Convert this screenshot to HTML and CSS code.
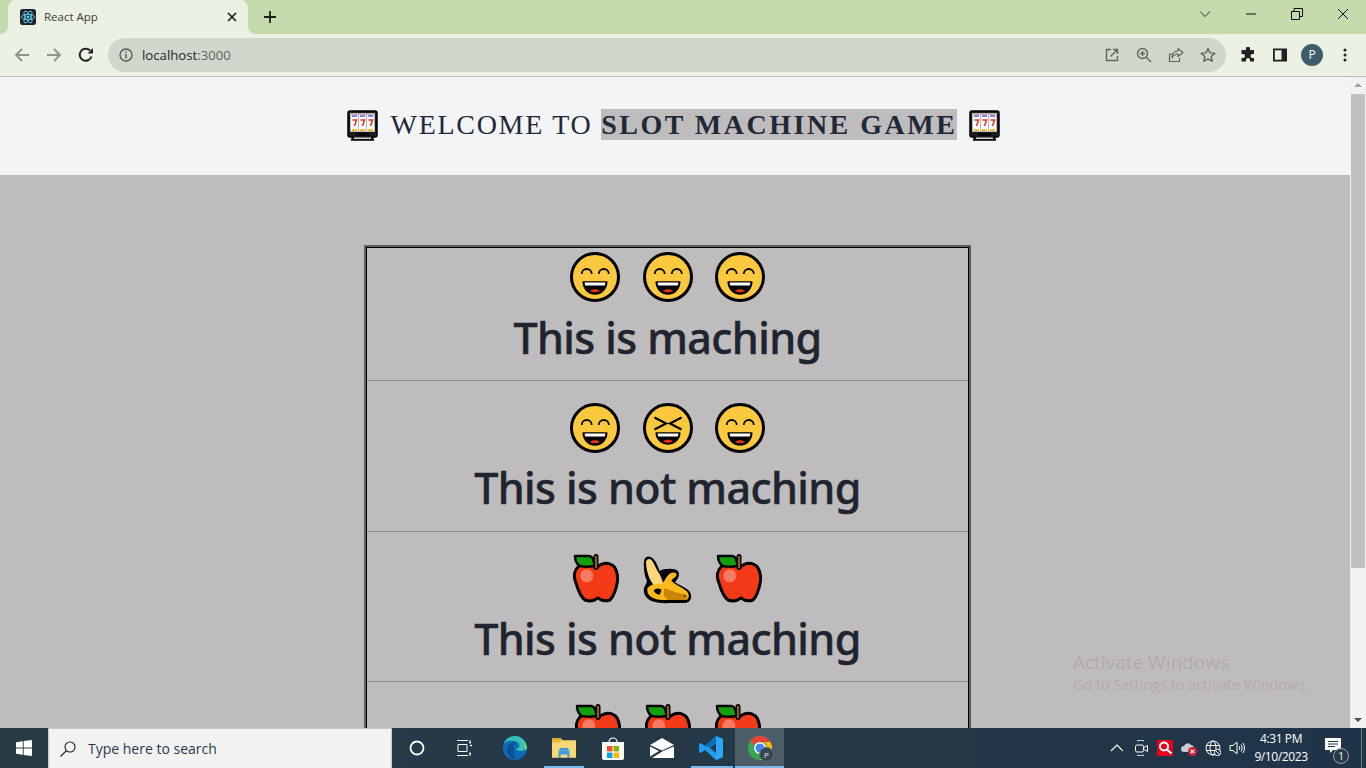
FILE: index.html
```html
<!DOCTYPE html>
<html lang="en">
<head>
<meta charset="utf-8">
<title>React App</title>
<link rel="stylesheet" href="styles.css">
</head>
<body>
<svg class="defs" width="0" height="0" aria-hidden="true">
  <defs>
    <symbol id="smile" viewBox="0 0 50 50">
      <circle cx="25" cy="25" r="23.500" fill="#fcc93e" stroke="#000" stroke-width="3"/>
      <path d="M11.700 22a5 5 0 0 1 10 0M28.800 22a5 5 0 0 1 10 0" fill="none" stroke="#000" stroke-width="1.800"/>
      <path d="M13.200 30h23.600c-.5 8-6 12-11.800 12s-11.300-4-11.800-12z" fill="#000" stroke="#000" stroke-width="1.500" stroke-linejoin="round"/>
      <path d="M14.500 30.500h21l-.6 3h-19.800z" fill="#fff"/>
      <path d="M20 39c2-2.200 8-2.200 10 0-3 1.800-7 1.800-10 0z" fill="#e63212"/>
    </symbol>
    <symbol id="laugh" viewBox="0 0 50 50">
      <circle cx="25" cy="25" r="23.500" fill="#fcc93e" stroke="#000" stroke-width="3"/>
      <path d="M11.500 14.500L23 20.500 11.500 26.500M38.500 14.500L27 20.500 38.500 26.500" fill="none" stroke="#000" stroke-width="2.300"/>
      <path d="M13.200 30h23.600c-.5 7-6 11-11.800 11s-11.300-4-11.800-11z" fill="#000" stroke="#000" stroke-width="1.500" stroke-linejoin="round"/>
      <path d="M14.500 30.500h21l-.6 3h-19.800z" fill="#fff"/>
      <path d="M20 38.500c2-2.200 8-2.200 10 0-3 1.800-7 1.800-10 0z" fill="#e63212"/>
    </symbol>
    <symbol id="apple" viewBox="3 0 46 50">
      <path d="M27 13C22 9 12 9 8 13 4 17 3.500 23 6 29c2 7 5 14 9 17 4 1.500 9 1 13-2 4 3 8 3.500 12 2 3-3 6-10 7.500-19 .5-7-1.500-14-5.500-16-5-3-11-1-15 2z" fill="#f43a16" stroke="#000" stroke-width="3" stroke-linejoin="round"/>
      <path d="M5 2h14c3 0 5 3 5.500 10-8 1.500-15 .5-16-1C6.500 9 5 6 5 2z" fill="#14a00d" stroke="#000" stroke-width="2.500" stroke-linejoin="round"/>
      <path d="M26 2.500v11" stroke="#000" stroke-width="5" stroke-linecap="round"/>
      <path d="M26 2v12" stroke="#8b5a2b" stroke-width="2.300"/>
      <circle cx="16.800" cy="21.800" r="6.500" fill="#f57c63"/>
    </symbol>
    <symbol id="banana" viewBox="0.500 0 49 50">
      <path d="M1.500 7C2 3 6 1.500 9 3.500 13 6 15 11 17 17c3-2 11-3 16-1.500 4 1.500 4.500 5.500 2 9.500l-2.500 3.500c4.500 2.500 9.500 4.500 12.500 7 4.500 3.500 5 9.500 1 12.500-3 1.500-8 1-16 1-8 .5-18 0-23-3-6-4-7.500-10-3.500-16l1-3c-3-6-3.500-14-3-20z" fill="#000"/>
      <path d="M3.500 8C4 5 7 4 9 6c3 4 5 10 8 14 2 4 3 7 4 10l-8 3C8 28 4 20 3.500 8z" fill="#fdd67a"/>
      <path d="M5 34c3-4 9-5 14-4 3-2 5-8 8-10 3-2 7-2 7 1-1 3-4 3-5 6 4 4 10 6 15 10 3 3 3 7 0 9H20C12 46 3 42 5 34z" fill="#fcb91b"/>
      <path d="M22 34c6 3 14 5 22 7 2 2 1 4-1 5H26c-4-2-6-6-4-12z" fill="#c98400"/>
      <path d="M11 36c3-2 6-2 8 0l-2 5c-3-1-5-2-6-5z" fill="#000"/>
      <circle cx="42" cy="41.800" r="1.300" fill="#7b4a12"/>
    </symbol>
    <symbol id="slot" viewBox="0 0 31 31">
      <path d="M3 1h25a2 2 0 0 1 2 2v22a2 2 0 0 1-2 2h-3l1.500 3H4.500L6 27H3a2 2 0 0 1-2-2V3a2 2 0 0 1 2-2z" fill="#1d1d1d" stroke="#000" stroke-width="1.500" stroke-linejoin="round"/>
      <rect x="3" y="3" width="25" height="19" fill="#b5b5b5"/>
      <rect x="4" y="5" width="7" height="16" fill="#fff"/>
      <rect x="12" y="5" width="7" height="16" fill="#fff"/>
      <rect x="20" y="5" width="7" height="16" fill="#fff"/>
      <path d="M5 5h5v2H5zM13 5h5v2h-5zM21 5h5v2h-5z" fill="#9a7be0"/>
      <path d="M5 19h5v2H5zM13 19h5v2h-5zM21 19h5v2h-5z" fill="#fcbc2c"/>
      <path d="M5.500 10h4l-2 6M13.500 10h4l-2 6M21.500 10h4l-2 6" fill="none" stroke="#e8301a" stroke-width="1.500"/>
      <rect x="9" y="23" width="13" height="3" fill="#000"/>
      <rect x="7" y="27.500" width="17" height="1.500" fill="#cfcfcf"/>
    </symbol>
  </defs>
</svg>

<div class="tabstrip">
  <div class="tab">
    <svg class="favicon" viewBox="0 0 17 17"><rect width="17" height="17" rx="3" fill="#20232a"/><g fill="none" stroke="#61dafb" stroke-width=".9"><ellipse cx="8.500" cy="8.500" rx="7" ry="2.800"/><ellipse cx="8.500" cy="8.500" rx="7" ry="2.800" transform="rotate(60 8.500 8.500)"/><ellipse cx="8.500" cy="8.500" rx="7" ry="2.800" transform="rotate(120 8.500 8.500)"/></g><circle cx="8.500" cy="8.500" r="1.400" fill="#61dafb"/></svg>
    <span class="tab-title">React App</span>
    <svg class="tab-close" viewBox="0 0 10 10"><path d="M1 1l8 8M9 1l-8 8" stroke="#202124" stroke-width="1.700"/></svg>
  </div>
  <svg class="new-tab" viewBox="0 0 12 12"><path d="M6 0v12M0 6h12" stroke="#1c1d1f" stroke-width="1.800"/></svg>
  <div class="win-controls">
    <svg class="win-chevron" viewBox="0 0 12 12"><path d="M1 3.500l5 5 5-5" fill="none" stroke="#2a2c2a" stroke-width="1"/></svg>
    <svg class="win-min" viewBox="0 0 12 12"><path d="M1 6h10" stroke="#111" stroke-width="1"/></svg>
    <svg class="win-restore" viewBox="0 0 12 12"><path d="M.5 3.500h8v8h-8zM3 3.500V.5h8.500v8h-3" fill="none" stroke="#111" stroke-width="1"/></svg>
    <svg class="win-close" viewBox="0 0 12 12"><path d="M1 1l10 10M11 1L1 11" stroke="#111" stroke-width="1"/></svg>
  </div>
</div>

<div class="toolbar">
  <svg class="nav" viewBox="0 0 16 16"><path d="M15 8H2M8 2L2 8l6 6" fill="none" stroke="#8f958c" stroke-width="1.900"/></svg>
  <svg class="nav" viewBox="0 0 16 16"><path d="M1 8h13M8 2l6 6-6 6" fill="none" stroke="#8f958c" stroke-width="1.900"/></svg>
  <svg class="nav" viewBox="0 0 16 16"><path d="M13.500 9.500A6 6 0 1 1 12 3.500" fill="none" stroke="#1f2123" stroke-width="2"/><path d="M9.500 6.500h5.500V1z" fill="#1f2123"/></svg>
  <div class="omnibox">
    <svg class="info" viewBox="0 0 14 14"><circle cx="7" cy="7" r="6" fill="none" stroke="#52574f" stroke-width="1.300"/><path d="M7 6v4.500M7 3.500v1.500" stroke="#52574f" stroke-width="1.400"/></svg>
    <span class="url"><span class="host">localhost</span>:3000</span>
    <span class="omni-space"></span>
    <svg class="omni-icon" viewBox="0 0 16 16"><path d="M7 2.500H2.500v11h11V9M6.500 9.500L13 3M9 2.500h4.500V7" fill="none" stroke="#5f655d" stroke-width="1.400"/></svg>
    <svg class="omni-icon" viewBox="0 0 16 16"><circle cx="6.500" cy="6.500" r="5" fill="none" stroke="#5f655d" stroke-width="1.400"/><path d="M10 10l5 5M6.500 4v5M4 6.500h5" stroke="#5f655d" stroke-width="1.400"/></svg>
    <svg class="omni-icon" viewBox="0 0 16 16"><path d="M15 5.500L10 1.500v2.500c-4 0-6 3-6 7 1.500-3 3.500-4 6-4v2.500z" fill="none" stroke="#5f655d" stroke-width="1.200" stroke-linejoin="round"/><path d="M5 7H1.500v7.500h10V11" fill="none" stroke="#5f655d" stroke-width="1.200"/></svg>
    <svg class="omni-icon" viewBox="0 0 16 16"><path d="M8 1.500l2 4.400 4.800.5-3.600 3.200 1 4.700L8 11.900l-4.200 2.400 1-4.700L1.200 6.400 6 5.900z" fill="none" stroke="#5f655d" stroke-width="1.400" stroke-linejoin="round"/></svg>
  </div>
  <svg class="tool-icon tool-ext" viewBox="0 0 16 16"><path d="M6 1.500a2 2 0 0 1 4 0V3h4v4h-1.500a2 2 0 0 0 0 4H14v3.500H10V13a2 2 0 0 0-4 0v1.500H1.500V11H3a2 2 0 0 0 0-4H1.500V3H6z" fill="#1f2123"/></svg>
  <svg class="tool-icon tool-side" viewBox="0 0 14 14"><rect x=".9" y="1.400" width="12.200" height="11.200" fill="none" stroke="#1f2123" stroke-width="1.800"/><rect x="8.500" y="1.400" width="4.600" height="11.200" fill="#1f2123"/></svg>
  <span class="avatar">P</span>
  <svg class="tool-menu" viewBox="0 0 4 14"><circle cx="2" cy="2" r="1.500" fill="#1f2123"/><circle cx="2" cy="7" r="1.500" fill="#1f2123"/><circle cx="2" cy="12" r="1.500" fill="#1f2123"/></svg>
</div>

<div class="viewport">
  <div class="page">
    <header class="page-head">
      <h1 class="title">
        <svg class="slot slot-left"><use href="#slot"/></svg>
        <span>WELCOME TO <mark class="title-mark">SLOT MACHINE GAME</mark></span>
        <svg class="slot"><use href="#slot"/></svg>
      </h1>
    </header>
    <main class="board">
      <section class="card">
        <div class="row row-first">
          <div class="reels"><svg class="reel"><use href="#smile"/></svg><svg class="reel"><use href="#smile"/></svg><svg class="reel"><use href="#smile"/></svg></div>
          <p class="verdict">This is maching</p>
        </div>
        <div class="row">
          <div class="reels"><svg class="reel"><use href="#smile"/></svg><svg class="reel"><use href="#laugh"/></svg><svg class="reel"><use href="#smile"/></svg></div>
          <p class="verdict">This is not maching</p>
        </div>
        <div class="row">
          <div class="reels reels-fruit"><svg class="reel-apple"><use href="#apple"/></svg><svg class="reel-banana"><use href="#banana"/></svg><svg class="reel-apple"><use href="#apple"/></svg></div>
          <p class="verdict">This is not maching</p>
        </div>
        <div class="row">
          <div class="reels reels-fruit"><svg class="reel-apple"><use href="#apple"/></svg><svg class="reel-apple"><use href="#apple"/></svg><svg class="reel-apple"><use href="#apple"/></svg></div>
        </div>
      </section>
    </main>
    <div class="watermark">
      <div class="wm-big">Activate Windows</div>
      <div class="wm-small">Go to Settings to activate Windows.</div>
    </div>
  </div>
  <div class="scrollbar">
    <span class="arrow-up"></span>
    <span class="thumb"></span>
    <span class="track"></span>
    <span class="arrow-down"></span>
  </div>
</div>

<footer class="taskbar">
  <div class="start"><svg class="winlogo" viewBox="0 0 16 16"><path d="M0 2.200L6.800 1.200V7.500H0zM7.700 1.100L16 0V7.500H7.700zM0 8.400H6.800V14.800L0 13.800zM7.700 8.400H16V16L7.700 14.900z" fill="#fff"/></svg></div>
  <div class="search">
    <svg class="search-icon" viewBox="0 0 16 16"><circle cx="10" cy="6" r="5" fill="none" stroke="#1a1a1a" stroke-width="1.100"/><path d="M6.500 9.500L.5 15.500" stroke="#1a1a1a" stroke-width="1.100"/></svg>
    <span class="search-text">Type here to search</span>
  </div>
  <div class="task-item"><svg class="i16" viewBox="0 0 16 16"><circle cx="8" cy="8" r="6.500" fill="none" stroke="#fff" stroke-width="1.800"/></svg></div>
  <div class="task-item"><svg class="i16 taskview" viewBox="0 0 16 16"><path d="M1 .5h11M1 15.500h11M2 4.500h9v7H2z" fill="none" stroke="#fff" stroke-width="1"/><path d="M14 .5v3M14 5.500h2M14 12.500v3" stroke="#fff" stroke-width="1.500"/></svg></div>
  <div class="task-item"><svg class="i24" viewBox="0 0 24 24"><circle cx="12" cy="12" r="12" fill="#0f6ab5"/><path d="M24 13c0-7-5-13-12-13C7 0 2 3 .5 8 3 5 7 4 11 5c5 1 6 4 5 6-1 1-2 2-4 2 2 2 8 3 12 0z" fill="#34c0b8"/><path d="M22 12c0-5-4-9-9-10 5 1 11 5 11 11z" fill="#7fdc5c"/><path d="M12 13c-3-2-2-5 1-6-5-1-9 2-9 7 0 5 5 10 11 9-4-1-6-6-3-10z" fill="#0c4f94"/></svg></div>
  <div class="task-item task-open"><svg class="i24 folder" viewBox="0 0 22 20"><path d="M0 1h8l2 2h12v16H0z" fill="#f8d775"/><path d="M0 1h8l2 2H0z" fill="#e0a526"/><path d="M0 3h9l-2 2H0z" fill="#e9b838"/><path d="M6 12h10v7h-2v-3H8v3H6z" fill="#3e9ae0"/><path d="M7 10h8v2H7z" fill="#3e9ae0"/></svg></div>
  <div class="task-item"><svg class="i24" viewBox="0 0 24 24"><path d="M8 6a4 4 0 0 1 8 0" fill="none" stroke="#fff" stroke-width="1.200"/><path d="M1 6h22v16a2 2 0 0 1-2 2H3a2 2 0 0 1-2-2z" fill="#fff"/><path d="M6 10h5.500v5.500H6z" fill="#f25022"/><path d="M12.500 10H18v5.500h-5.500z" fill="#7fba00"/><path d="M6 16.500h5.500V22H6z" fill="#00a4ef"/><path d="M12.500 16.500H18V22h-5.500z" fill="#ffb900"/></svg></div>
  <div class="task-item"><svg class="i24" viewBox="0 0 24 20"><path d="M0 7L12 0l12 7L12 12.500z" fill="#fff"/><path d="M0 8.500l9 4.500-9 5.500zM24 8.500V20H2l11-7z" fill="#fff"/></svg></div>
  <div class="task-item task-running"><svg class="i24" viewBox="0 0 24 24"><path d="M17 0l7 3v18l-7 3-11-10-4 3-2-1V8l2-1 4 3zM17 7l-6 5 6 5z" fill="#1f9cf0"/><path d="M17 0l7 3v18l-7 3z" fill="#2aa8f5"/><path d="M17 0v7l-6 5-5-2z" fill="#0b6fb8"/></svg></div>
  <div class="task-item task-active">
    <svg class="i24" viewBox="0 0 24 24"><circle cx="12" cy="12" r="12" fill="#35a853"/><path d="M12 0a12 12 0 0 1 10.400 6H12a6 6 0 0 0-5.500 3.500L2.300 5A12 12 0 0 1 12 0z" fill="#ea4335"/><path d="M22.400 6A12 12 0 0 1 12 24l5-9a6 6 0 0 0-1-9z" fill="#fbbc04"/><circle cx="12" cy="12" r="6" fill="#fff"/><circle cx="12" cy="12" r="4.500" fill="#4285f4"/></svg>
    <span class="chrome-badge">P</span>
  </div>
  <div class="tray-space"></div>
  <div class="tray">
    <svg class="tray-icon" viewBox="0 0 16 16"><path d="M2 11l6-6 6 6" fill="none" stroke="#fff" stroke-width="1.200"/></svg>
    <svg class="tray-icon" viewBox="0 0 16 16"><path d="M4 1c2-1 5-1 7 0M4 15c2 1 5 1 7 0" fill="none" stroke="#fff" stroke-width="1"/><rect x="2.500" y="5" width="8" height="7" rx="1.500" fill="none" stroke="#fff" stroke-width="1"/><path d="M11 7.500l3.500-2v6l-3.500-2" fill="none" stroke="#fff" stroke-width="1"/></svg>
    <svg class="tray-icon" viewBox="0 0 16 16"><rect width="16" height="16" fill="#e8001c"/><circle cx="7" cy="6.500" r="4" fill="none" stroke="#fff" stroke-width="2"/><path d="M10 9.500l4.500 4" stroke="#fff" stroke-width="2.200"/></svg>
    <svg class="tray-icon" viewBox="0 0 16 16"><path d="M3 12a3 3 0 0 1 0-6 4 4 0 0 1 7-1c2 0 3 2 3 3v4z" fill="#c9cdd1"/><circle cx="11.500" cy="11.500" r="4.500" fill="#d4213a"/><path d="M9.800 9.800l3.400 3.400M13.200 9.800l-3.400 3.400" stroke="#fff" stroke-width="1.200"/></svg>
    <svg class="tray-icon" viewBox="0 0 16 16"><circle cx="8" cy="8" r="7" fill="none" stroke="#fff" stroke-width="1"/><ellipse cx="8" cy="8" rx="3" ry="7" fill="none" stroke="#fff" stroke-width="1"/><path d="M1 5.500h14M1 10.500h14" stroke="#fff" stroke-width="1"/><circle cx="12.500" cy="12.500" r="3.200" fill="#1f3448" stroke="#fff" stroke-width="1"/><path d="M10.500 10.500l4 4" stroke="#fff" stroke-width="1"/></svg>
    <svg class="tray-icon" viewBox="0 0 16 16"><path d="M1 5.500h3l4-3.500v12l-4-3.500H1z" fill="none" stroke="#fff" stroke-width="1"/><path d="M10 6c1 1 1 3 0 4M12 4.500c1.500 2 1.500 5 0 7M14 3c2 3 2 7 0 10" fill="none" stroke="#fff" stroke-width="1"/></svg>
  </div>
  <div class="clock"><div>4:31 PM</div><div>9/10/2023</div></div>
  <div class="notify">
    <svg class="notify-icon" viewBox="0 0 16 16"><path d="M0 0h16v12h-8l-3 3v-3H0z" fill="#fff"/><path d="M3 3.500h10M3 6h10M3 8.500h7" stroke="#1f3448" stroke-width="1"/></svg>
    <span class="notify-badge">1</span>
  </div>
  <div class="show-desktop"></div>
</footer>
</body>
</html>
```

FILE: styles.css
```css
* { box-sizing: border-box; }
html, body { margin: 0; padding: 0; }
body {
  width: 1366px;
  height: 768px;
  overflow: hidden;
  display: flex;
  flex-direction: column;
  font-family: "Open Sans", "Noto Sans", sans-serif;
  background: #bfbcbd;
}
.defs { position: absolute; }

/* browser chrome */
.tabstrip {
  height: 34px;
  flex: none;
  display: flex;
  align-items: flex-start;
  background: #c5dbae;
  padding-left: 8px;
}
.tab {
  position: relative;
  width: 240px;
  height: 34px;
  background: #ebf2e3;
  border-radius: 8px 8px 0 0;
  display: flex;
  align-items: center;
  padding: 0 11px 0 12px;
}
.tab::before,
.tab::after {
  content: "";
  position: absolute;
  bottom: 0;
  width: 8px;
  height: 8px;
}
.tab::before {
  left: -8px;
  background: radial-gradient(circle at 0 0, #c5dbae 7.500px, #ebf2e3 8.500px);
}
.tab::after {
  right: -8px;
  background: radial-gradient(circle at 100% 0, #c5dbae 7.500px, #ebf2e3 8.500px);
}
.favicon { width: 16px; height: 16px; flex: none; }
.tab-title {
  margin: 0 0 2px 8px;
  flex: 1;
  font-size: 11.500px;
  color: #3a3d3a;
}
.tab-close { width: 10px; height: 10px; }
.new-tab { width: 12px; height: 12px; margin: 11px 0 0 16px; }
.win-controls {
  margin-left: auto;
  display: flex;
  align-items: center;
  height: 28px;
}
.win-controls svg { width: 12px; height: 12px; flex: none; }
.win-chevron { margin-right: 34px; }
.win-min { margin-right: 34px; }
.win-restore { margin-right: 34px; }
.win-close { margin-right: 17px; }

.toolbar {
  height: 43px;
  flex: none;
  display: flex;
  align-items: center;
  background: #ebf2e3;
  border-bottom: 1px solid #b7bfb1;
  padding: 0 0 1px 14px;
}
.nav { width: 16px; height: 16px; margin-right: 16px; flex: none; }
.omnibox {
  width: 1118px;
  height: 34px;
  margin-left: -2px;
  border-radius: 17px;
  background: #d0d7cc;
  display: flex;
  align-items: center;
  padding: 0 10px 0 11px;
}
.info { width: 14px; height: 14px; flex: none; }
.url { margin-left: 9px; font-size: 13.200px; color: #5f655d; }
.host { color: #26292a; }
.omni-space { flex: 1; }
.omni-icon { width: 16px; height: 16px; margin-left: 16px; flex: none; }
.tool-icon { flex: none; }
.tool-ext { width: 16px; height: 16px; margin-left: 14px; }
.tool-side { width: 14px; height: 14px; margin-left: 17px; }
.avatar {
  width: 22px;
  height: 22px;
  margin-left: 14px;
  border-radius: 50%;
  background: #3f5b6a;
  color: #fff;
  font-size: 12px;
  line-height: 22px;
  text-align: center;
  flex: none;
}
.tool-menu { width: 4px; height: 14px; margin-left: 20px; flex: none; }

/* page */
.viewport {
  flex: 1;
  min-height: 0;
  display: flex;
}
.page {
  position: relative;
  width: 1350px;
  flex: none;
  overflow: hidden;
  background: #bfbcbd;
}
.page-head {
  height: 98px;
  background: #f3f4f6;
  display: flex;
  align-items: center;
  justify-content: center;
}
.title {
  margin: 0 3px 2px 0;
  display: flex;
  align-items: center;
  gap: 12px;
  font-family: "Liberation Serif", "Times New Roman", serif;
  font-size: 28px;
  font-weight: 400;
  letter-spacing: 1.700px;
  color: #1f2937;
  white-space: nowrap;
}
.title-mark {
  background: #bfbcbd;
  color: #1f2937;
  font-weight: 700;
  letter-spacing: 2.500px;
}
.slot { width: 31px; height: 31px; flex: none; }
.slot-left { margin-right: 1px; }

.board { padding: 70px 0 0 364px; }
.card {
  width: 607px;
  border: 2px solid #5f5f5f;
  box-shadow: inset 1px 1px 0 0 #000, inset -1px 0 0 0 #000;
}
.row {
  height: 150.500px;
  margin: 0 1px;
  padding-top: 22px;
  border-bottom: 1px solid #8f8d8e;
  text-align: center;
}
.row-first { height: 134px; padding-top: 5px; }
.row-first .verdict { margin-top: 6px; }
.reels {
  display: flex;
  justify-content: center;
  gap: 22.500px;
}
.reels-fruit { gap: 24px; }
.reel { width: 50px; height: 50px; flex: none; }
.reel-apple { width: 46px; height: 50px; flex: none; }
.reel-banana { width: 49px; height: 50px; flex: none; }
.verdict {
  margin: 5px 0 0;
  font-size: 43px;
  letter-spacing: -0.600px;
  line-height: 60px;
  font-weight: 500;
  -webkit-text-stroke: 0.500px #1f2530;
  font-family: "Noto Sans", "Open Sans", sans-serif;
  color: #1f2530;
}
.watermark {
  position: absolute;
  left: 1073px;
  top: 572px;
  color: #aeabac;
  white-space: nowrap;
}
.wm-big { font-size: 19px; line-height: 26px; }
.wm-small { font-size: 14.400px; line-height: 20px; }

.scrollbar {
  width: 16px;
  flex: none;
  display: flex;
  flex-direction: column;
  align-items: center;
  background: #f1f1f1;
}
.arrow-up {
  margin-top: 6px;
  border: 4px solid transparent;
  border-top: 0;
  border-bottom: 4px solid #a3a3a3;
}
.thumb {
  width: 14px;
  height: 474px;
  margin-top: 7px;
  background: #c1c1c1;
}
.track { flex: 1; }
.arrow-down {
  margin-bottom: 6px;
  border: 4px solid transparent;
  border-bottom: 0;
  border-top: 4px solid #505050;
}

/* taskbar */
.taskbar {
  height: 40px;
  flex: none;
  display: flex;
  align-items: center;
  background: linear-gradient(90deg, #293b45 0%, #263946 35%, #1f3447 100%);
}
.start {
  width: 48px;
  height: 40px;
  flex: none;
  display: flex;
  align-items: center;
  justify-content: center;
}
.winlogo { width: 16px; height: 16px; }
.search {
  width: 344px;
  height: 40px;
  flex: none;
  background: #f2f2f2;
  border: 1px solid #c8c8c8;
  border-width: 1px 1px 0;
  display: flex;
  align-items: center;
  padding-left: 11px;
}
.search-icon { width: 16px; height: 16px; flex: none; }
.search-text { margin-left: 12px; font-size: 14px; color: #2b3a4a; }
.task-item {
  position: relative;
  width: 49px;
  height: 40px;
  flex: none;
  display: flex;
  align-items: center;
  justify-content: center;
}
.i16 { width: 16px; height: 16px; }
.i24 { width: 24px; height: 24px; }
.folder { height: 22px; }
.taskview { margin-right: 3px; }
.task-open::after,
.task-running::after {
  content: "";
  position: absolute;
  bottom: 0;
  height: 2px;
  background: #76b9ed;
}
.task-open::after { left: 5px; width: 40px; }
.task-running::after { left: 5px; width: 42px; }
.task-active { background: #4d5d68; box-shadow: inset 0 -2px 0 #76b9ed; }
.chrome-badge {
  position: absolute;
  left: 24px;
  top: 19px;
  width: 15px;
  height: 15px;
  border-radius: 50%;
  background: #36464f;
  border: 1px solid #5d6b73;
  color: #e8e8e8;
  font-size: 8px;
  line-height: 13px;
  text-align: center;
}
.tray-space { flex: 1; }
.tray { display: flex; align-items: center; gap: 8px; }
.tray-icon { width: 16px; height: 16px; flex: none; }
.clock {
  width: 60px;
  flex: none;
  margin: 0 2px 0 6px;
  text-align: center;
  color: #fff;
  font-size: 12px;
  letter-spacing: -0.400px;
  line-height: 18px;
  white-space: nowrap;
}
.notify {
  position: relative;
  width: 40px;
  height: 40px;
  flex: none;
  display: flex;
  align-items: center;
  justify-content: center;
}
.notify-icon { width: 16px; height: 16px; margin-bottom: 4px; }
.notify-badge {
  position: absolute;
  left: 20px;
  top: 20px;
  width: 16px;
  height: 16px;
  border-radius: 50%;
  background: #2a3a46;
  border: 1px solid #9ba4aa;
  color: #fff;
  font-size: 10px;
  line-height: 14px;
  text-align: center;
}
.show-desktop {
  width: 9px;
  height: 40px;
  flex: none;
  margin-right: 4px;
  border-right: 1px solid #6d7d88;
}
```
